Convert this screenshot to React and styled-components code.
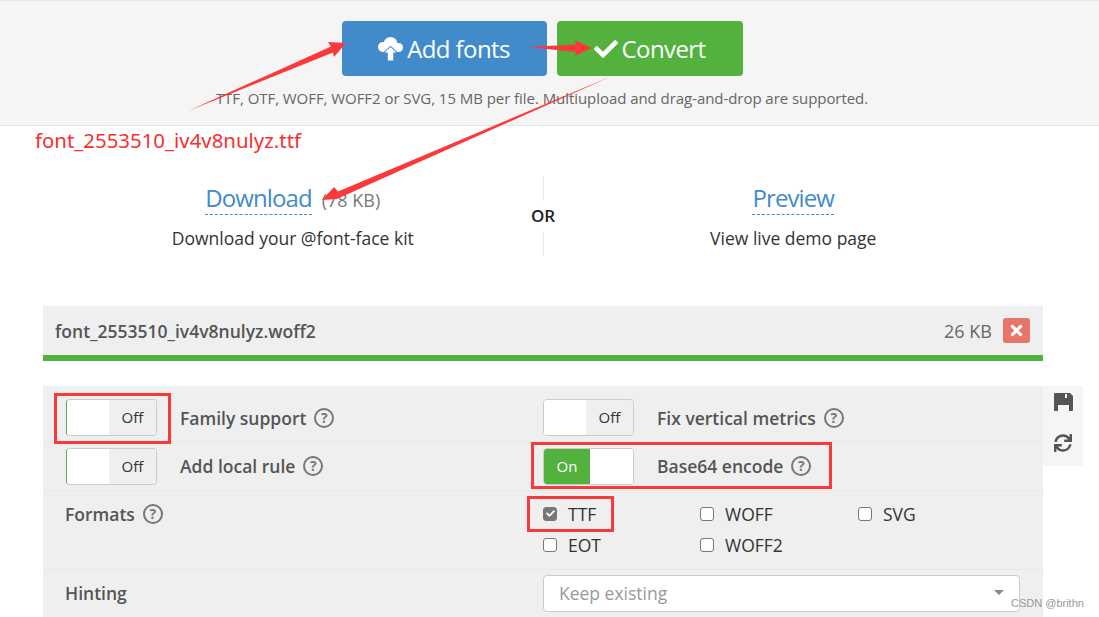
import React from 'react';
import styled, { createGlobalStyle } from 'styled-components';
import { FaCheck, FaSync, FaTimes } from 'react-icons/fa';

const Global = createGlobalStyle`
  html, body { margin: 0; padding: 0; background: #fff; }
  body { font-family: "Open Sans", "Liberation Sans", sans-serif; color: #555; }
  * { box-sizing: border-box; }
`;

const Page = styled.div`
  position: relative;
  width: 1099px;
  height: 617px;
  overflow: hidden;
`;
const Header = styled.header`
  height: 126px;
  background: #f5f5f5;
  border-top: 1px solid #e8e8e8;
  border-bottom: 1px solid #e5e5e5;
  padding-top: 20px;
  display: flex;
  flex-direction: column;
  align-items: center;
`;
const Buttons = styled.div`
  display: flex;
  gap: 10px;
  margin-right: 15px;
`;
const BigButton = styled.div`
  width: ${p => p.$w}px;
  height: 55px;
  border-radius: 4px;
  background: ${p => p.$bg};
  color: #fff;
  font-size: 24px;
  letter-spacing: -0.6px;
  line-height: 55px;
  display: flex;
  align-items: center;
  justify-content: center;
  gap: 4px;
  svg { flex: none; }
`;
const Note = styled.p`
  margin: 12px 15px 0 0;
  font-size: 15px;
  letter-spacing: -0.055px;
  line-height: 20px;
  color: #666;
`;
const Main = styled.main`
  width: 1040px;
  margin-left: 43px;
`;
const Choice = styled.section`
  width: 1000px;
  margin-top: 50px;
  height: 80px;
  display: grid;
  grid-template-columns: 1fr 1px 1fr;
  text-align: center;
`;
const ChoiceCol = styled.div`
  display: flex;
  flex-direction: column;
  align-items: center;
  padding-top: 6px;
`;
const Divider = styled.div`
  position: relative;
  background: #e8e8e8;
`;
const Or = styled.span`
  position: absolute;
  left: -14px;
  top: 25px;
  width: 29px;
  background: #fff;
  font-size: 17px;
  font-weight: 600;
  line-height: 30px;
  color: #222;
`;
const LinkRow = styled.div`
  height: 33px;
  line-height: 33px;
  white-space: nowrap;
`;
const DashedLink = styled.span`
  font-size: 24px;
  letter-spacing: -0.9px;
  color: #428bca;
  border-bottom: 1px dashed #428bca;
  display: inline-block;
  line-height: 32px;
`;
const Size = styled.span`
  font-size: 18px;
  color: #777;
  margin-left: 10px;
`;
const ChoiceText = styled.div`
  margin-top: 11px;
  font-size: 17.5px;
  line-height: 24px;
  color: #333;
`;
const FileBar = styled.div`
  width: 1000px;
  margin-top: 50px;
  height: 55px;
  background: #efefef;
  border-bottom: 6px solid #53b13d;
  display: flex;
  align-items: center;
  justify-content: space-between;
  padding: 0 13px 0 12px;
`;
const FileName = styled.div`
  font-size: 17.5px;
  font-weight: 600;
  color: #555;
`;
const FileRight = styled.div`
  display: flex;
  align-items: center;
  gap: 11px;
  font-size: 18px;
  color: #666;
`;
const CloseBtn = styled.div`
  width: 27px;
  height: 25px;
  border-radius: 3px;
  background: #e8756a;
  color: #fff;
  display: flex;
  align-items: center;
  justify-content: center;
  font-size: 17px;
`;
const OptionsWrap = styled.div`
  display: flex;
  margin-top: 25px;
  align-items: flex-start;
`;
const Options = styled.div`
  width: 1000px;
  background: #efefef;
`;
const Side = styled.aside`
  width: 40px;
  height: 80px;
  background: #f5f5f5;
  display: flex;
  flex-direction: column;
  align-items: center;
  padding-top: 7px;
  gap: 23px;
  color: #555;
  font-size: 18px;
  svg { display: block; }
`;
const Row = styled.div`
  display: grid;
  grid-template-columns: 477px 1fr;
  height: ${p => p.$h}px;
  border-bottom: 1px solid #e8e8e8;
  padding-left: 23px;
  padding-top: ${p => p.$pt || 0}px;
  align-items: ${p => p.$top ? 'start' : 'center'};
`;
const Cell = styled.div`
  display: flex;
  align-items: center;
`;
const ToggleBox = styled.div`
  width: 91px;
  height: 37px;
  border: 1px solid #ccc;
  border-left-color: ${p => p.$edge ? '#53b13d' : '#ccc'};
  border-radius: 4px;
  background: #fff;
  display: flex;
  overflow: hidden;
  flex: none;
  margin-right: 23px;
  font-size: 15px;
  line-height: 35px;
  text-align: center;
`;
const ToggleOff = styled.div`
  flex: 1;
  background: #fff;
`;
const ToggleLabel = styled.div`
  width: 47px;
  background: #efefef;
  color: #333;
`;
const ToggleOn = styled.div`
  width: 46px;
  background: #53b13d;
  color: #fff;
`;
const Label = styled.span`
  font-size: 17.5px;
  font-weight: 600;
  color: #555;
`;
const Help = styled.span`
  width: 20px;
  height: 20px;
  margin-left: 8px;
  border: 2px solid #777;
  border-radius: 50%;
  color: #777;
  font-size: 14px;
  font-weight: 700;
  line-height: 16px;
  text-align: center;
  flex: none;
`;
const FormatsLabel = styled(Label)`
  display: flex;
  align-items: center;
  margin-left: -1px;
  padding-top: 11px;
  line-height: 24px;
`;
const FormatGrid = styled.div`
  display: grid;
  grid-template-columns: 157px 158px 100px;
  grid-auto-rows: 31px;
  padding-top: 7px;
`;
const Check = styled.div`
  display: flex;
  align-items: center;
  gap: 11px;
  font-size: 17.5px;
  color: #333;
  height: 31px;
`;
const Box = styled.span`
  width: 14px;
  height: 14px;
  flex: none;
  border-radius: 3px;
  border: 1.5px solid #777;
  background: ${p => p.$on ? '#777' : '#fff'};
  color: #fff;
  display: flex;
  align-items: center;
  justify-content: center;
  font-size: 9px;
`;
const SelectBox = styled.div`
  width: 477px;
  height: 37px;
  margin-top: 5px;
  border: 1px solid #ccc;
  border-radius: 4px;
  background: #fff;
  display: flex;
  align-items: center;
  justify-content: space-between;
  padding: 0 15px 2px;
  font-size: 17.5px;
  color: #999;
`;
const Caret = styled.span`
  width: 0;
  height: 0;
  border-left: 5px solid transparent;
  border-right: 5px solid transparent;
  border-top: 5px solid #888;
`;
const Annotation = styled.svg`
  position: absolute;
  left: 0;
  top: 0;
  pointer-events: none;
`;
const RedName = styled.div`
  position: absolute;
  left: 35px;
  top: 126px;
  font-family: "Noto Sans", sans-serif;
  font-size: 20.4px;
  line-height: 28px;
  color: #f5302f;
`;
const Watermark = styled.div`
  position: absolute;
  left: 1011px;
  top: 596px;
  font-family: "Liberation Sans", sans-serif;
  font-size: 11px;
  line-height: 14px;
  color: #999;
`;

const CloudUpload = () => (
  <svg width="25" height="24" viewBox="0 0 25 24" aria-hidden="true">
    <g fill="#fff">
      <circle cx="5" cy="10" r="5" />
      <circle cx="12.5" cy="7" r="7" />
      <circle cx="20.5" cy="10.5" r="4.5" />
      <rect x="5" y="8" width="15.5" height="7" />
    </g>
    <polygon
      points="12.5,10 18.5,15.6 15.2,15.6 15.2,23.5 9.8,23.5 9.8,15.6 6.5,15.6"
      fill="#fff"
      stroke="#428bca"
      strokeWidth="2"
      paintOrder="stroke"
    />
  </svg>
);

const Floppy = () => (
  <svg width="19" height="18" viewBox="0 0 19 18" fill="currentColor" aria-hidden="true">
    <path fillRule="evenodd" d="M1 0h15l3 3v14a1 1 0 0 1-1 1h-3v-6H4v6H1a1 1 0 0 1-1-1V1a1 1 0 0 1 1-1zM11 1v4h2V1z" />
  </svg>
);

const Toggle = ({ on, edge }) => (
  <ToggleBox $edge={edge}>
    {on ? (
      <><ToggleOn>On</ToggleOn><ToggleOff /></>
    ) : (
      <><ToggleOff /><ToggleLabel>Off</ToggleLabel></>
    )}
  </ToggleBox>
);

const Fmt = ({ name, on }) => (
  <Check><Box $on={on}>{on && <FaCheck />}</Box>{name}</Check>
);

export default function App() {
  return (
    <Page>
      <Global />
      <Header>
        <Buttons>
          <BigButton $w={205} $bg="#428bca"><CloudUpload />Add fonts</BigButton>
          <BigButton $w={186} $bg="#53b13d"><FaCheck size={24} />Convert</BigButton>
        </Buttons>
        <Note>TTF, OTF, WOFF, WOFF2 or SVG, 15 MB per file. Multiupload and drag-and-drop are supported.</Note>
      </Header>
      <Main>
        <Choice>
          <ChoiceCol>
            <LinkRow><DashedLink>Download</DashedLink><Size>(78 KB)</Size></LinkRow>
            <ChoiceText>Download your @font-face kit</ChoiceText>
          </ChoiceCol>
          <Divider><Or>OR</Or></Divider>
          <ChoiceCol>
            <LinkRow><DashedLink>Preview</DashedLink></LinkRow>
            <ChoiceText>View live demo page</ChoiceText>
          </ChoiceCol>
        </Choice>
        <FileBar>
          <FileName>font_2553510_iv4v8nulyz.woff2</FileName>
          <FileRight>26 KB<CloseBtn><FaTimes /></CloseBtn></FileRight>
        </FileBar>
        <OptionsWrap>
          <Options>
            <Row $h={56} $pt={8}>
              <Cell><Toggle edge /><Label>Family support</Label><Help>?</Help></Cell>
              <Cell><Toggle /><Label>Fix vertical metrics</Label><Help>?</Help></Cell>
            </Row>
            <Row $h={49}>
              <Cell><Toggle edge /><Label>Add local rule</Label><Help>?</Help></Cell>
              <Cell><Toggle on /><Label>Base64 encode</Label><Help>?</Help></Cell>
            </Row>
            <Row $h={79} $top>
              <FormatsLabel>Formats<Help>?</Help></FormatsLabel>
              <FormatGrid>
                <Fmt name="TTF" on />
                <Fmt name="WOFF" />
                <Fmt name="SVG" />
                <Fmt name="EOT" />
                <Fmt name="WOFF2" />
              </FormatGrid>
            </Row>
            <Row $h={50} $top>
              <FormatsLabel>Hinting</FormatsLabel>
              <SelectBox>Keep existing<Caret /></SelectBox>
            </Row>
          </Options>
          <Side><Floppy /><FaSync /></Side>
        </OptionsWrap>
      </Main>
      <RedName>font_2553510_iv4v8nulyz.ttf</RedName>
      <Annotation width="1099" height="617" viewBox="0 0 1099 617">
        <g fill="#fa3a3a">
          <polygon points="188,111 331,46.5 328,42 346,43 334,57 333,52.5" />
          <polygon points="528,47 576,44.5 575,40 592,48 575,56 576,52" />
          <polygon points="612,76 338,191.5 334,187 322,200 337,199 340,197.5" />
        </g>
        <g fill="none" stroke="#fa3a3a" strokeWidth="3">
          <rect x="55.5" y="394.5" width="114" height="48" />
          <rect x="532.5" y="443.5" width="298" height="44" />
          <rect x="528.5" y="497.5" width="84" height="33" />
        </g>
      </Annotation>
      <Watermark>CSDN @brithn</Watermark>
    </Page>
  );
}
